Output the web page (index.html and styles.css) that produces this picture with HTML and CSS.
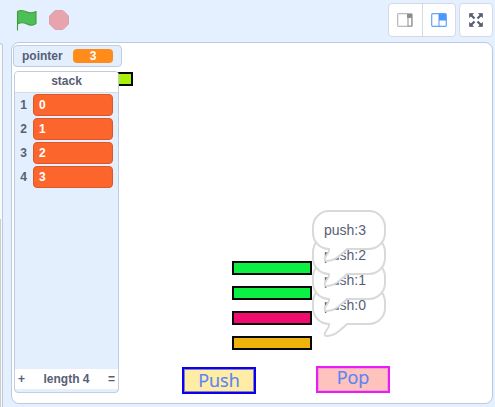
FILE: index.html
```html
<!DOCTYPE html>
<html lang="en">
<head>
<meta charset="utf-8">
<title>Stack</title>
<link rel="stylesheet" href="styles.css">
</head>
<body>
<svg class="defs" width="0" height="0">
  <symbol id="bubble" viewBox="0 0 76 54">
    <path d="M17 1H57A16 16 0 0 1 73 17V23A16 16 0 0 1 57 39H35Q31 43 27 46Q22 50.500 15 51Q12 51 13 48Q14 45.500 16 43Q17.500 41 17 39A16 16 0 0 1 1 23V17A16 16 0 0 1 17 1Z" fill="#fff" stroke="#d9d9d9" stroke-width="2"/>
  </symbol>
</svg>
<div class="app">
  <div class="side"><div class="thumb"></div></div>
  <main class="player">
    <header class="toolbar">
      <svg class="flag" width="22" height="22" viewBox="0 0 22 22"><path d="M1.500 21V2.500C5 .5 8 1.500 11 3C14 4.500 17 4 20 2.500V14.500C17 17 14 16.500 11 15C8 13.500 5 13 1.500 15" fill="#4cbf56" stroke="#45993d" stroke-width="1.100" stroke-linecap="round" stroke-linejoin="round"/></svg>
      <svg class="stop" width="22" height="22" viewBox="0 0 22 22"><path d="M7 1.500H15L20.500 7V15L15 20.500H7L1.500 15V7Z" fill="#e8a4ad" stroke="#dca0ab" stroke-linejoin="round"/></svg>
      <div class="sizes">
        <button class="size"><svg width="16" height="14" viewBox="0 0 16 14"><rect x=".7" y=".7" width="14.600" height="12.600" rx="1" fill="#fff" stroke="#b8b8b8" stroke-width="1.200"/><path d="M10 1H15V5H10Z" fill="#8c8c8c"/><path d="M11 4V13H14.700V4" fill="none" stroke="#a0a0a0" stroke-width="1.200"/></svg></button>
        <button class="size"><svg width="16" height="14" viewBox="0 0 16 14"><rect x=".7" y=".7" width="14.600" height="12.600" rx="1" fill="#fff" stroke="#5ea4ff" stroke-width="1.200"/><path d="M8 1H15V7H8Z" fill="#4c97ff"/><path d="M8 1V13M8 7H15" stroke="#4c97ff"/></svg></button>
      </div>
      <button class="full"><svg width="14" height="14" viewBox="0 0 14 14"><g fill="#575e75" stroke="#575e75"><path d="M.5 .5H4.500L.5 4.500ZM9.500 .5H13.500V4.500ZM.5 9.500V13.500H4.500ZM13.500 9.500V13.500H9.500Z" stroke-width=".7"/><path d="M2 2L5.500 5.500M12 2L8.500 5.500M2 12L5.500 8.500M12 12L8.500 8.500" stroke-width="2.200"/></g></svg></button>
    </header>
    <section class="stage">
      <div class="block lime"></div>
      <div class="block green b3"></div>
      <div class="block green b2"></div>
      <div class="block pink"></div>
      <div class="block gold"></div>
      <div class="say s0"><svg width="76" height="54"><use href="#bubble"/></svg><span>push:0</span></div>
      <div class="say s1"><svg width="76" height="54"><use href="#bubble"/></svg><span>push:1</span></div>
      <div class="say s2"><svg width="76" height="54"><use href="#bubble"/></svg><span>push:2</span></div>
      <div class="say s3"><svg width="76" height="54"><use href="#bubble"/></svg><span>push:3</span></div>
      <div class="action push">Push</div>
      <div class="action pop">Pop</div>
      <div class="variable"><span>pointer</span><b>3</b></div>
      <div class="list">
        <div class="list-title">stack</div>
        <div class="rows">
          <div class="row"><span>1</span><b>0</b></div>
          <div class="row"><span>2</span><b>1</b></div>
          <div class="row"><span>3</span><b>2</b></div>
          <div class="row"><span>4</span><b>3</b></div>
        </div>
        <div class="list-foot"><span>+</span><span>length 4</span><span>=</span></div>
      </div>
    </section>
  </main>
</div>
</body>
</html>
```

FILE: styles.css
```css
* { box-sizing: border-box; }
body {
  margin: 0;
  background: #e4f0ff;
  color: #575e75;
  font: 12px "Liberation Sans", Arial, sans-serif;
  overflow: hidden;
}
.defs { position: absolute; }
.app { display: flex; height: 407px; }
.side {
  width: 3px;
  margin-top: 43px;
  padding-top: 175px;
  background: #f9f9f9;
  border-right: 1px solid #bdcbdd;
  border-top: 1px solid #bdcbdd;
  border-top-right-radius: 3px;
}
.thumb { width: 1px; height: 100%; background: #cecdce; }
.player { flex: 1; padding: 0 2px 0 8px; }
.toolbar {
  display: flex;
  align-items: flex-start;
  height: 42px;
  padding-top: 3px;
}
.flag { margin: 6px 0 0 5px; }
.stop { margin: 6px 0 0 10px; }
.sizes {
  display: flex;
  width: 68px;
  height: 34px;
  margin-left: auto;
  border: 1px solid #d5d9e1;
  border-radius: 4px;
  background: #fff;
}
.size, .full {
  display: flex;
  align-items: center;
  justify-content: center;
  padding: 0;
  border: 0;
  background: none;
}
.size { flex: 1; }
.size + .size { border-left: 1px solid #d5d9e1; }
.full {
  width: 34px;
  height: 34px;
  margin-left: 3px;
  border: 1px solid #d5d9e1;
  border-radius: 4px;
  background: #fff;
}
.stage {
  position: relative;
  width: 482px;
  height: 362px;
  border: 1px solid #bccbdc;
  border-radius: 8px;
  background: #fff;
}
.block {
  position: absolute;
  left: 220px;
  width: 80px;
  height: 14px;
  border: 2px solid #080808;
}
.lime { left: 41px; top: 29px; background: #a9ef0b; }
.green { background: #0cef43; }
.b3 { top: 218px; }
.b2 { top: 243px; }
.pink { top: 268px; background: #ef0c6d; }
.gold { top: 293px; background: #efb30c; }
.say {
  position: absolute;
  isolation: isolate;
  left: 300px;
  display: grid;
  width: 76px;
  height: 54px;
  font-size: 14px;
  line-height: 16px;
}
.say > * { grid-area: 1 / 1; }
.say span { z-index: 1; padding: 12px 0 0 12px; }
.s3 { top: 167px; }
.s2 { top: 192px; }
.s1 { top: 217px; }
.s0 { top: 242px; }
.action {
  position: absolute;
  width: 74px;
  height: 27px;
  color: #5984f5;
  font: 18px/23px "Open Sans", "Noto Sans", sans-serif;
  -webkit-text-stroke: .2px #5984f5;
  text-align: center;
}
.push {
  left: 170px;
  top: 324px;
  border: 2px solid #0b00f5;
  background: #ffeda6;
  box-shadow: inset 0 0 0 1px #8580b8;
}
.pop {
  left: 304px;
  top: 323px;
  border: 2px solid #e91cf5;
  background: #ffc3bd;
  box-shadow: inset 0 0 0 1px #eda0cc;
  line-height: 19px;
}
.variable {
  position: absolute;
  left: 1px;
  top: 2px;
  display: flex;
  align-items: center;
  width: 109px;
  height: 22px;
  padding: 0 8px;
  border: 1px solid #c0cde0;
  border-radius: 4px;
  background: #e4effd;
  font-weight: bold;
}
.variable b {
  width: 40px;
  height: 14px;
  margin-left: auto;
  border-radius: 4px;
  background: #ff8c1a;
  color: #fff;
  line-height: 14px;
  text-align: center;
}
.list {
  position: absolute;
  left: 2px;
  top: 28px;
  display: flex;
  flex-direction: column;
  width: 105px;
  height: 322px;
  border: 1px solid #c0cde0;
  border-radius: 4px;
  background: #e4effd;
  font-weight: bold;
  overflow: hidden;
}
.list-title {
  height: 21px;
  border-bottom: 1px solid #d5d9e1;
  background: #fff;
  line-height: 19px;
  text-align: center;
}
.rows {
  display: flex;
  flex: 1;
  flex-direction: column;
  gap: 2px;
  padding: 1px 5px 0 4px;
}
.row { display: flex; align-items: center; height: 22px; }
.row span { width: 9px; text-align: center; }
.row b {
  flex: 1;
  height: 22px;
  margin-left: 5px;
  padding-left: 5px;
  border: 1px solid #d9582b;
  border-radius: 4px;
  background: #fc662c;
  color: #fff;
  line-height: 20px;
}
.list-foot {
  display: flex;
  align-items: center;
  justify-content: space-between;
  height: 20px;
  margin-bottom: 3px;
  padding: 0 3px;
  background: #fff;
}
```
